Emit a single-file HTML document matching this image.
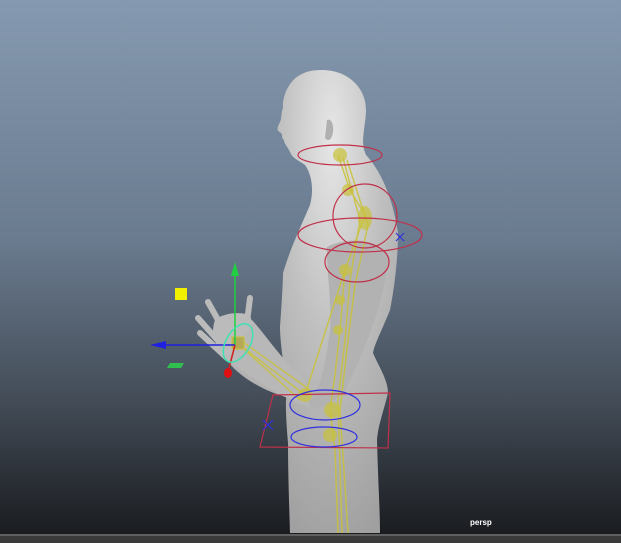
<!DOCTYPE html>
<html><head><style>
html,body{margin:0;padding:0;width:621px;height:543px;overflow:hidden;background:#222}
.t{position:absolute;left:470px;top:518px;color:#fff;font:bold 8px "Liberation Sans",sans-serif}
</style></head><body>
<svg width="621" height="543" style="position:absolute;left:0;top:0">
<defs>
<linearGradient id="bg" x1="0" y1="0" x2="0" y2="1">
<stop offset="0" stop-color="#8599b0"/><stop offset="0.45" stop-color="#6a7b8f"/><stop offset="0.75" stop-color="#434c57"/><stop offset="1" stop-color="#1a1c20"/>
</linearGradient>
<radialGradient id="sk" cx="0.45" cy="0.15" r="0.9">
<stop offset="0" stop-color="#e6e6e6"/><stop offset="0.5" stop-color="#bebebe"/><stop offset="1" stop-color="#a0a0a0"/>
</radialGradient>
</defs>
<rect width="621" height="534" fill="url(#bg)"/>
<rect y="534" width="621" height="9" fill="#3a3a3a"/>
<rect y="534" width="621" height="2" fill="#606060"/>
<!-- body -->
<path fill="url(#sk)" d="M322 70 C348 70 367 88 366 112 C365 130 360 142 366 155 C382 172 393 200 398 233 C398 260 394 290 390 310 C382 330 374 345 373 353 C378 365 388 380 388 393 C384 410 378 425 377 440 C378 480 380 510 380 533 L290 533 C289 500 288 470 288 443 C286 420 285 400 287 393 C283 360 280 340 280 327 C282 300 283 280 283 273 C290 250 297 235 310 205 C314 190 312 175 305 165 C298 160 292 158 290 152 C288 147 284 144 284 140 C281 138 283 135 281 133 C276 130 277 128 280 122 C282 118 281 112 283 108 C282 95 290 80 300 75 C307 71 314 70 322 70Z"/>
<path fill="#b0b0b0" d="M327 120 C331 118 334 124 333 132 C332 140 328 142 325 138Z"/>
<path fill="#b2b2b2" d="M327 247 C350 235 385 240 388 260 C385 300 365 350 347 387 C340 400 320 410 310 407 C290 400 270 380 252 320 L227 360 C240 380 280 400 305 400 C318 400 325 370 330 330 C332 300 326 270 327 247Z"/>
<path fill="#b8b8b8" d="M310 407 C285 400 255 380 227 360 L252 320 C270 340 285 365 305 378Z"/>
<path fill="#bbb" stroke="#bbb" stroke-width="6" stroke-linecap="round" d="M227 358 L200 333 M228 352 L198 318 M232 345 L208 302 M246 330 L250 298"/>
<path fill="#bbb" d="M227 360 C215 345 210 335 215 320 C225 312 240 312 250 315 L252 322Z"/>
<!-- rig -->
<g fill="none" stroke="#c9c23a" stroke-width="1.5" opacity="0.85">
<path d="M338 155 L350 190 L365 215 L345 270 L340 330 L335 375 L330 410 L335 450 L338 533"/>
<path d="M343 158 L360 220 L350 280 L345 340 L338 400 L342 533"/>
<path d="M347 160 L368 225 L355 285 L348 340 L340 410 L348 533"/>
<path d="M240 345 L305 395 L345 270 M240 340 L310 390 M245 350 L300 400"/>
</g>
<g fill="#c9c23a" opacity="0.7">
<circle cx="340" cy="155" r="7"/><circle cx="348" cy="190" r="6"/><ellipse cx="365" cy="218" rx="7" ry="12"/><circle cx="345" cy="270" r="6"/><circle cx="340" cy="300" r="5"/><circle cx="338" cy="330" r="5"/><circle cx="305" cy="395" r="7"/><circle cx="332" cy="410" r="8"/><circle cx="330" cy="435" r="7"/>
</g>
<rect x="232" y="337" width="12" height="12" fill="#b5a955" stroke="#c9c23a"/>
<g fill="none" stroke="#c0304a" stroke-width="1.2">
<ellipse cx="340" cy="155" rx="42" ry="10"/>
<circle cx="365" cy="216" r="32"/>
<ellipse cx="360" cy="235" rx="62" ry="17"/>
<ellipse cx="357" cy="262" rx="32" ry="20"/>
<path d="M273 395 L390 393 L388 448 L260 447Z"/>
</g>
<g fill="none" stroke="#3030e0" stroke-width="1.2">
<ellipse cx="325" cy="405" rx="35" ry="15"/>
<ellipse cx="324" cy="437" rx="33" ry="10"/>
<path d="M263 420 L273 430 M273 420 L263 430 M396 233 L404 241 M404 233 L396 241"/>
</g>
<line x1="235" y1="345" x2="235" y2="272" stroke="#20d040" stroke-width="1.5"/>
<path d="M235 262 L231 276 L239 276Z" fill="#20d040"/>
<line x1="235" y1="345" x2="162" y2="345" stroke="#2020e0" stroke-width="1.5"/>
<path d="M150 345 L166 341 L166 349Z" fill="#2020e0"/>
<line x1="235" y1="345" x2="229" y2="368" stroke="#d02020" stroke-width="1.5"/>
<ellipse cx="228" cy="373" rx="4" ry="5" fill="#e01010"/>
<ellipse cx="238" cy="343" rx="12" ry="21" transform="rotate(30 238 343)" fill="none" stroke="#40e0b0" stroke-width="1.5"/>
<rect x="175" y="288" width="12" height="12" fill="#f0f000"/>
<path d="M170 363 L184 363 L181 368 L167 368Z" fill="#30c050"/>
</svg>
<div class="t">persp</div>
</body></html>
